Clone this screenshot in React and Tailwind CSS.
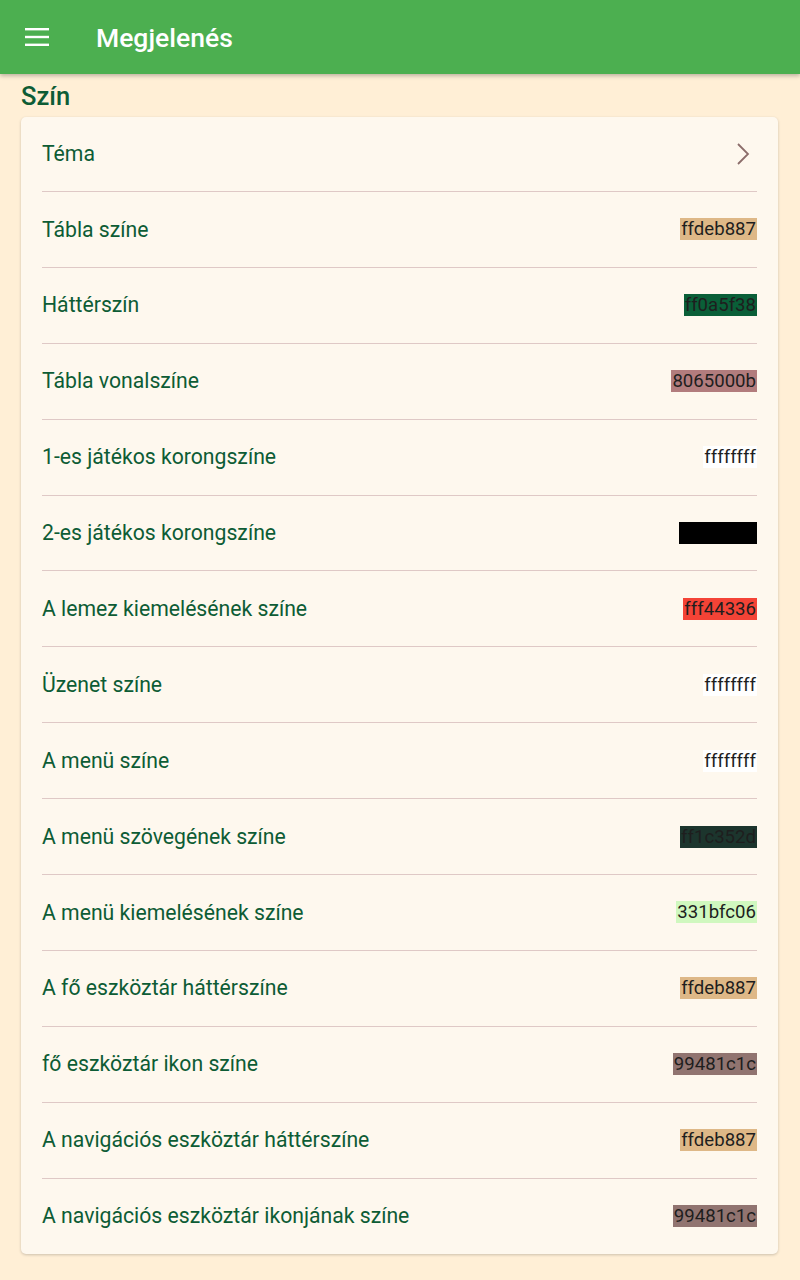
import React from 'react';

// Színbeállítások listája
const rows = [
  { label: 'Tábla színe', value: 'ffdeb887', bg: '#deb887' },
  { label: 'Háttérszín', value: 'ff0a5f38', bg: '#0a5f38' },
  { label: 'Tábla vonalszíne', value: '8065000b', bg: 'rgba(101,0,11,0.5)' },
  { label: '1-es játékos korongszíne', value: 'ffffffff', bg: '#ffffff' },
  { label: '2-es játékos korongszíne', value: 'ff000000', bg: '#000000', fg: '#000000' },
  { label: 'A lemez kiemelésének színe', value: 'fff44336', bg: '#f44336' },
  { label: 'Üzenet színe', value: 'ffffffff', bg: '#ffffff' },
  { label: 'A menü színe', value: 'ffffffff', bg: '#ffffff' },
  { label: 'A menü szövegének színe', value: 'ff1c352d', bg: '#1c352d' },
  { label: 'A menü kiemelésének színe', value: '331bfc06', bg: 'rgba(27,252,6,0.2)' },
  { label: 'A fő eszköztár háttérszíne', value: 'ffdeb887', bg: '#deb887' },
  { label: 'fő eszköztár ikon színe', value: '99481c1c', bg: 'rgba(72,28,28,0.6)' },
  { label: 'A navigációs eszköztár háttérszíne', value: 'ffdeb887', bg: '#deb887' },
  { label: 'A navigációs eszköztár ikonjának színe', value: '99481c1c', bg: 'rgba(72,28,28,0.6)' },
];

const Row = ({ label, children, last }) => (
  <div className={`flex items-center justify-between ${last ? 'h-[75px]' : 'h-[75.9px] border-b border-[#dfc9c6]'}`}>
    <span className="text-[21.2px] text-[#0d5c35]">{label}</span>
    {children}
  </div>
);

export default function App() {
  return (
    <div
      className="min-h-[1280px] bg-[#ffefd6]"
      style={{ fontFamily: 'Roboto, "Noto Sans", sans-serif' }}
    >
      {/* Eszköztár */}
      <header className="h-[74px] bg-[#4caf50] flex items-center shadow-[0_2px_4px_rgba(0,0,0,0.25)]">
        <div className="w-[96px] flex items-center pl-[25px]">
          <svg width="24" height="18" viewBox="0 0 24 18">
            <rect x="0" y="0" width="24" height="2.4" fill="white" />
            <rect x="0" y="7.8" width="24" height="2.4" fill="white" />
            <rect x="0" y="15.6" width="24" height="2.4" fill="white" />
          </svg>
        </div>
        <h1 className="text-[26.5px] font-medium text-white pt-[1px]">Megjelenés</h1>
      </header>

      <div className="pl-[21px] pr-[22px]">
        <h2 className="text-[25.5px] font-medium text-[#0d5c35] h-[43px] flex items-center pt-[2px]">Szín</h2>

        <div className="bg-[#fef8ee] rounded-[5px] shadow-[0_1px_3px_rgba(0,0,0,0.2)] px-[21px]">
          <div className="flex items-center justify-between h-[75px] border-b border-[#dfc9c6]">
            <span className="text-[21.2px] text-[#0d5c35]">Téma</span>
            <svg width="16" height="24" viewBox="0 0 16 24" className="mr-[6px]">
              <path d="M3 2 L13 12 L3 22" stroke="#8c6d6a" strokeWidth="1.8" fill="none" />
            </svg>
          </div>
          {rows.map((r, i) => (
            <Row key={i} label={r.label} last={i === rows.length - 1}>
              <span
                className="text-[18.6px] leading-[22px] px-px"
                style={{ backgroundColor: r.bg, color: r.fg || '#1e1e1e' }}
              >
                {r.value}
              </span>
            </Row>
          ))}
        </div>
      </div>
    </div>
  );
}
